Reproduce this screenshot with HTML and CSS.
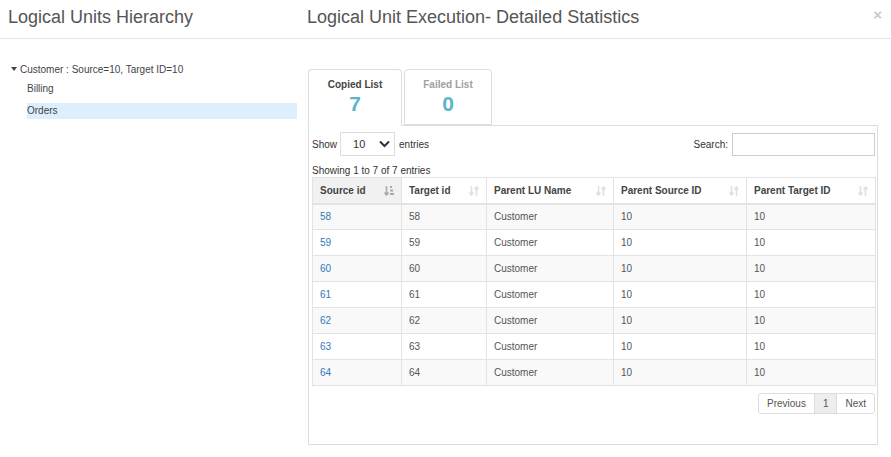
FILE: index.html
```html
<!DOCTYPE html>
<html>
<head>
<meta charset="utf-8">
<link rel="stylesheet" href="styles.css">
</head>
<body>
<div class="header">
  <div class="title title-left">Logical Units Hierarchy</div>
  <div class="title title-right">Logical Unit Execution- Detailed Statistics</div>
  <span class="close">&times;</span>
</div>
<div class="main">
  <div class="left">
    <div class="tree-root"><span class="caret"></span>Customer : Source=10, Target ID=10</div>
    <div class="tree-item">Billing</div>
    <div class="tree-item selected">Orders</div>
  </div>
  <div class="right">
    <div class="tabs">
      <div class="tab active"><div class="tab-label">Copied List</div><div class="tab-num">7</div></div>
      <div class="tab"><div class="tab-label">Failed List</div><div class="tab-num">0</div></div>
    </div>
    <div class="panel">
      <div class="controls">
        <div class="length">Show <span class="select">10<svg class="chev" width="11" height="8" viewBox="0 0 11 8"><path d="M1 1.5 L5.5 6 L10 1.5" fill="none" stroke="#333" stroke-width="2"/></svg></span> entries</div>
        <div class="search">Search: <span class="input"></span></div>
      </div>
      <div class="info">Showing 1 to 7 of 7 entries</div>
      <table class="grid">
        <colgroup><col class="c1"><col class="c2"><col class="c3"><col class="c4"><col class="c5"></colgroup>
        <thead>
          <tr>
            <th class="sorted">Source id<svg class="sort" width="10" height="10" viewBox="0 0 10 10"><path d="M2.5 0 V9 M0.5 6.5 L2.5 9 L4.5 6.5" fill="none" stroke="#aaa" stroke-width="1.6"/><rect x="6" y="0" width="2" height="2" fill="#aaa"/><rect x="6" y="3.5" width="3" height="2" fill="#aaa"/><rect x="6" y="7" width="4" height="2" fill="#aaa"/></svg></th>
            <th>Target id<svg class="sort" width="10" height="10" viewBox="0 0 10 10"><path d="M2.5 0 V9 M0.5 6.5 L2.5 9 L4.5 6.5 M7.5 10 V1 M5.5 3.5 L7.5 1 L9.5 3.5" fill="none" stroke="#e0e0e0" stroke-width="1.6"/></svg></th>
            <th>Parent LU Name<svg class="sort" width="10" height="10" viewBox="0 0 10 10"><path d="M2.5 0 V9 M0.5 6.5 L2.5 9 L4.5 6.5 M7.5 10 V1 M5.5 3.5 L7.5 1 L9.5 3.5" fill="none" stroke="#e0e0e0" stroke-width="1.6"/></svg></th>
            <th>Parent Source ID<svg class="sort" width="10" height="10" viewBox="0 0 10 10"><path d="M2.5 0 V9 M0.5 6.5 L2.5 9 L4.5 6.5 M7.5 10 V1 M5.5 3.5 L7.5 1 L9.5 3.5" fill="none" stroke="#e0e0e0" stroke-width="1.6"/></svg></th>
            <th>Parent Target ID<svg class="sort" width="10" height="10" viewBox="0 0 10 10"><path d="M2.5 0 V9 M0.5 6.5 L2.5 9 L4.5 6.5 M7.5 10 V1 M5.5 3.5 L7.5 1 L9.5 3.5" fill="none" stroke="#e0e0e0" stroke-width="1.6"/></svg></th>
          </tr>
        </thead>
        <tbody>
          <tr><td><a>58</a></td><td>58</td><td>Customer</td><td>10</td><td>10</td></tr>
          <tr><td><a>59</a></td><td>59</td><td>Customer</td><td>10</td><td>10</td></tr>
          <tr><td><a>60</a></td><td>60</td><td>Customer</td><td>10</td><td>10</td></tr>
          <tr><td><a>61</a></td><td>61</td><td>Customer</td><td>10</td><td>10</td></tr>
          <tr><td><a>62</a></td><td>62</td><td>Customer</td><td>10</td><td>10</td></tr>
          <tr><td><a>63</a></td><td>63</td><td>Customer</td><td>10</td><td>10</td></tr>
          <tr><td><a>64</a></td><td>64</td><td>Customer</td><td>10</td><td>10</td></tr>
        </tbody>
      </table>
      <div class="pager">
        <span class="pg first">Previous</span><span class="pg current">1</span><span class="pg last">Next</span>
      </div>
    </div>
  </div>
</div>
</body>
</html>
```
FILE: styles.css
```css
* { box-sizing: border-box; }
body {
  margin: 0;
  font-family: "Liberation Sans", Arial, sans-serif;
  font-size: 10px;
  color: #333;
  background: #fff;
}
.header {
  position: relative;
  display: flex;
  height: 39px;
  border-bottom: 1px solid #e5e5e5;
  align-items: center;
}
.title {
  font-size: 18px;
  color: #555;
  padding-bottom: 4px;
}
.title-left { width: 307px; padding-left: 8px; }
.title-right { flex: 1; }
.close {
  position: absolute;
  right: 9px;
  top: 6px;
  font-size: 15px;
  font-weight: bold;
  color: #c8c8c8;
}
.main {
  display: flex;
}
.left {
  width: 308px;
  padding: 23px 11px 0 11px;
}
.tree-root {
  display: flex;
  align-items: center;
  height: 14px;
  color: #444;
}
.caret {
  display: inline-block;
  width: 0; height: 0;
  border-left: 3.5px solid transparent;
  border-right: 3.5px solid transparent;
  border-top: 4px solid #444;
  margin-right: 3px;
}
.tree-item {
  margin-left: 16px;
  height: 16px;
  line-height: 16px;
  color: #444;
  margin-top: 5px;
}
.tree-item.selected {
  background: #ddeefc;
  margin-top: 6px;
  width: 270px;
}
.right {
  width: 570px;
  padding-top: 30px;
}
.tabs {
  display: flex;
  gap: 2px;
  height: 56px;
}
.tab {
  border: 1px solid #ddd;
  border-radius: 4px 4px 0 0;
  text-align: center;
  background: #fff;
  width: 88px;
}
.tab.active {
  width: 94px;
  border-bottom-color: #fff;
  height: 57px;
  position: relative;
  z-index: 1;
}
.tab-label {
  margin-top: 9px;
  font-weight: bold;
  color: #a0a0a0;
  font-size: 10px;
}
.tab.active .tab-label { color: #444; }
.tab-num {
  font-size: 21px;
  font-weight: bold;
  color: #5bb5c9;
  line-height: 27px;
}
.panel {
  border: 1px solid #ddd;
  height: 320px;
  padding: 6px 2px 0 3px;
}
.controls {
  display: flex;
  justify-content: space-between;
  align-items: center;
}
.length { display: flex; align-items: center; }
.select {
  display: inline-flex;
  align-items: center;
  justify-content: space-between;
  width: 55px;
  height: 24px;
  border: 1px solid #ddd;
  margin: 0 4px 0 3px;
  padding: 0 4px 0 12px;
  font-size: 11px;
  color: #333;
}
.search { display: flex; align-items: center; }
.input {
  display: inline-block;
  width: 143px;
  height: 23px;
  border: 1px solid #ccc;
  margin-left: 4px;
}
.info {
  margin-top: 8px;
  height: 13px;
  line-height: 13px;
}
.grid {
  width: 563px;
  border-collapse: collapse;
  table-layout: fixed;
}
.c1 { width: 89px; }
.c2 { width: 85px; }
.c3 { width: 127px; }
.c4 { width: 133px; }
.c5 { width: 129px; }
.grid th, .grid td {
  border: 1px solid #e3e3e3;
  text-align: left;
  padding: 0 7px;
  height: 26px;
  white-space: nowrap;
}
.grid th {
  font-weight: bold;
  color: #444;
  border-bottom: 2px solid #e3e3e3;
  position: relative;
}
.grid th.sorted { background: #f1f1f1; }
.sort {
  position: absolute;
  right: 7px;
  top: 8px;
}
.grid td { color: #555; }
.grid tbody tr:nth-child(odd) td { background: #f9f9f9; }
.grid a { color: #337ab7; }
.pager {
  display: flex;
  justify-content: flex-end;
  margin-top: 7px;
}
.pg {
  border: 1px solid #ddd;
  height: 21px;
  line-height: 19px;
  padding: 0 8px;
  color: #555;
  margin-left: -1px;
}
.pg.first { border-radius: 3px 0 0 3px; }
.pg.last { border-radius: 0 3px 3px 0; }
.pg.current { background: #eee; }
```
